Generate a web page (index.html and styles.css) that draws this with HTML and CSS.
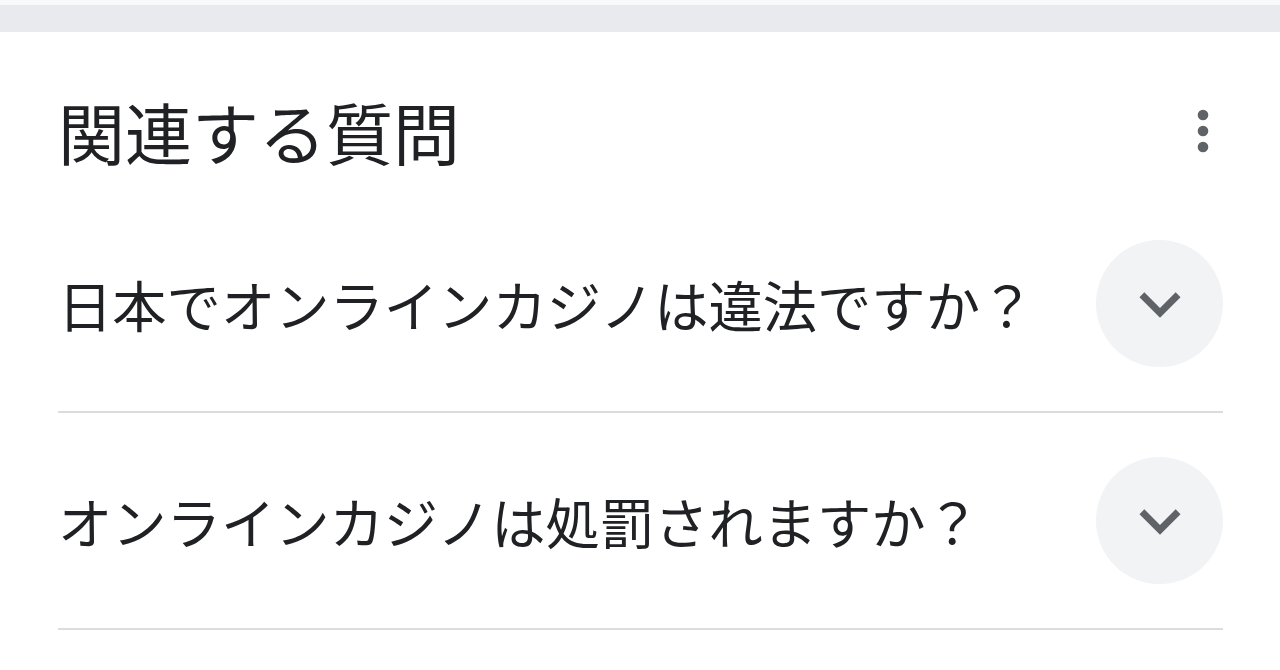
FILE: index.html
```html
<!DOCTYPE html>
<html lang="ja">
<head>
<meta charset="utf-8">
<title>関連する質問</title>
<link rel="stylesheet" href="styles.css">
</head>
<body>
<div class="band"></div>
<section class="card">
  <header class="card-head">
    <h2 class="card-title">関連する質問</h2>
    <button class="menu" aria-label="その他のオプション">
      <svg viewBox="0 0 24 24" width="64" height="64"><circle cx="12" cy="6" r="2"/><circle cx="12" cy="12" r="2"/><circle cx="12" cy="18" r="2"/></svg>
    </button>
  </header>
  <div class="qa">
    <span class="qa-text">日本でオンラインカジノは違法ですか？</span>
    <span class="qa-toggle">
      <svg viewBox="0 0 24 24" width="82" height="82"><path d="M16.59 8.59L12 13.17 7.41 8.59 6 10l6 6 6-6z"/></svg>
    </span>
  </div>
  <div class="qa">
    <span class="qa-text">オンラインカジノは処罰されますか？</span>
    <span class="qa-toggle">
      <svg viewBox="0 0 24 24" width="82" height="82"><path d="M16.59 8.59L12 13.17 7.41 8.59 6 10l6 6 6-6z"/></svg>
    </span>
  </div>
</section>
</body>
</html>
```

FILE: styles.css
```css
html, body {
  margin: 0;
  padding: 0;
}

body {
  font-family: "Noto Sans CJK JP", "Noto Sans", sans-serif;
  color: #202124;
  height: 670px;
  overflow: hidden;
  padding-top: 5px;
  box-sizing: border-box;
  background: #f8f9fa;
}

/* grey strip separating this card from the one above */
.band {
  height: 27px;
  background: #e8eaed;
}

.card {
  background: #ffffff;
  padding: 0 57px 0 58px;
  height: 100%;
}

.card-head {
  display: flex;
  align-items: center;
  justify-content: space-between;
  padding: 66px 0 32px;
}

.card-title {
  margin: 0;
  font-size: 67px;
  line-height: 66px;
  font-weight: 400;
  color: #202124;
}

.menu {
  border: 0;
  background: none;
  padding: 0;
  margin-right: -12px;
  display: flex;
  fill: #5f6368;
}

.qa {
  display: flex;
  align-items: center;
  justify-content: space-between;
  padding: 44px 0;
  border-bottom: 2px solid #dadce0;
}

.qa-text {
  font-size: 54.3px;
  line-height: 1.2;
  color: #202124;
}

.qa-toggle {
  width: 127px;
  height: 127px;
  border-radius: 50%;
  background: #f1f3f4;
  display: flex;
  align-items: center;
  justify-content: center;
  fill: #5f6368;
}
```
